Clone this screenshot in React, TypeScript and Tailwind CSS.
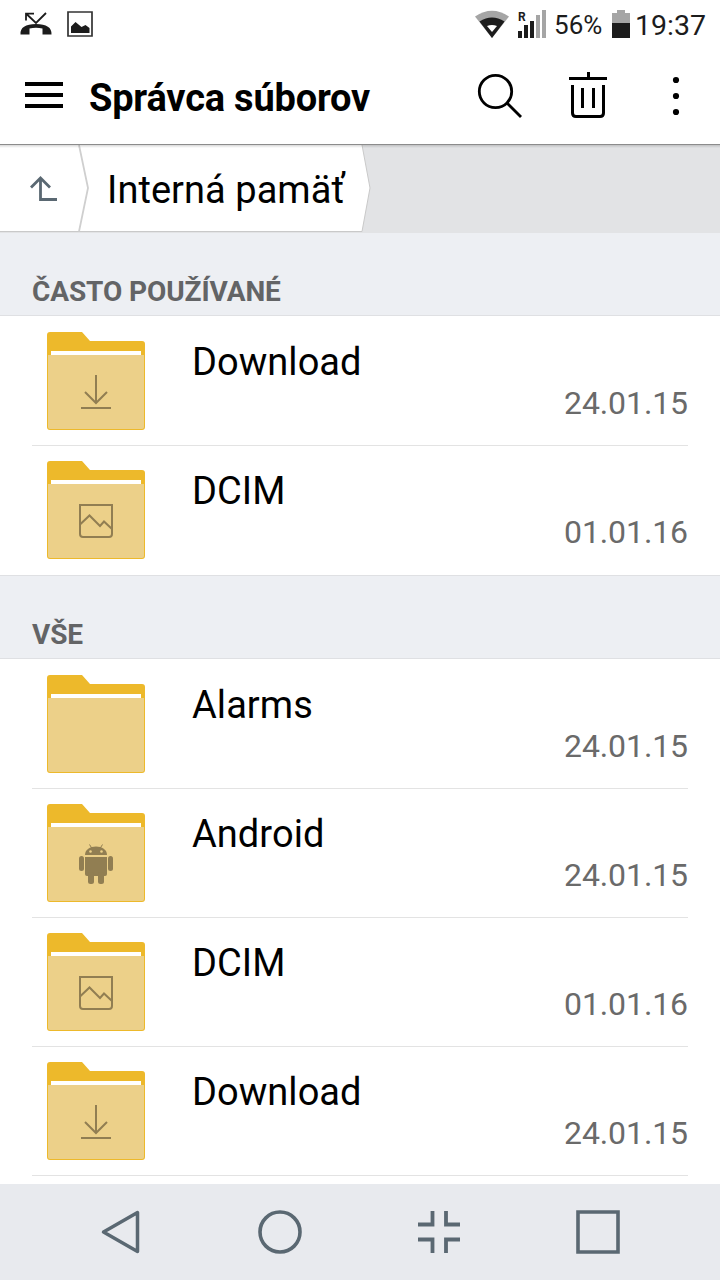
import type { ReactNode } from "react";

type FolderKind = "download" | "image" | "android" | "plain";

interface Folder {
  name: string;
  date: string;
  kind: FolderKind;
}

const frequent: Folder[] = [
  { name: "Download", date: "24.01.15", kind: "download" },
  { name: "DCIM", date: "01.01.16", kind: "image" },
];

const all: Folder[] = [
  { name: "Alarms", date: "24.01.15", kind: "plain" },
  { name: "Android", date: "24.01.15", kind: "android" },
  { name: "DCIM", date: "01.01.16", kind: "image" },
  { name: "Download", date: "24.01.15", kind: "download" },
];

const glyphs: Record<FolderKind, ReactNode> = {
  plain: null,
  download: (
    <path
      d="M49 43v27.5M38 60l11 11 11-11M34 76h30"
      fill="none"
      stroke="#917e52"
      strokeWidth="2"
    />
  ),
  image: (
    <g fill="none" stroke="#917e52" strokeWidth="2">
      <path d="M33 44h32v29a3 3 0 0 1-3 3H36a3 3 0 0 1-3-3z" />
      <path d="M33 63.500l9.500-9 10.500 10.500 4-4.500 8 7.500" />
    </g>
  ),
  android: (
    <g fill="#917e52">
      <path d="M38 51c0-5.500 5-8.500 11-8.500s11 3 11 8.500z" />
      <path d="M42.500 40.500l2.500 4M55.500 40.500l-2.500 4" stroke="#917e52" />
      <path d="M38 53h22v17a2 2 0 0 1-2 2H40a2 2 0 0 1-2-2z" />
      <rect x="32" y="52" width="5" height="15" rx="2.500" />
      <rect x="61" y="52" width="5" height="15" rx="2.500" />
      <rect x="41" y="68" width="6" height="12" rx="2.500" />
      <rect x="51" y="68" width="6" height="12" rx="2.500" />
      <circle cx="43.500" cy="47.500" r="1.300" fill="#ecd089" />
      <circle cx="54.500" cy="47.500" r="1.300" fill="#ecd089" />
    </g>
  ),
};

function FolderIcon({ kind }: { kind: FolderKind }) {
  return (
    <svg width="98" height="98" viewBox="0 0 98 98" className="shrink-0">
      <path
        d="M3 0H35L43 9H95a3 3 0 0 1 3 3V95a3 3 0 0 1-3 3H3a3 3 0 0 1-3-3V3a3 3 0 0 1 3-3z"
        fill="#edb92b"
      />
      <path d="M4 19h90v4H4z" fill="#fff" />
      <path
        d="M1 23h96v72a2 2 0 0 1-2 2H3a2 2 0 0 1-2-2z"
        fill="#ecd089"
      />
      {glyphs[kind]}
    </svg>
  );
}

function FolderList({ folders }: { folders: Folder[] }) {
  return (
    <ul className="bg-white px-8 pb-px">
      {folders.map((folder, i) => (
        <li
          key={i}
          className="flex h-[129px] border-t border-[#e3e3e3] pt-[15px] pl-[15px] first:border-transparent"
        >
          <FolderIcon kind={folder.kind} />
          <div className="ml-[47px] flex grow flex-col">
            <span className="mt-[7px] text-[38px] leading-[46px] tracking-[0.05px] text-black">
              {folder.name}
            </span>
            <span className="self-end text-[32px] leading-[36px] tracking-[-0.1px] text-[#6a6a6a]">
              {folder.date}
            </span>
          </div>
        </li>
      ))}
    </ul>
  );
}

function SectionTitle({ children }: { children: ReactNode }) {
  return (
    <h2 className="flex h-[83px] items-end border-b border-[#dfe0e3] bg-[#edeff3] px-8 pb-[7px] text-[28px] leading-[33px] font-bold tracking-[-0.1px] text-[#636466]">
      {children}
    </h2>
  );
}

function StatusBar() {
  return (
    <div className="flex h-12 items-center pr-[14px] pl-5 text-[#1c1c1c]">
      <svg width="32" height="26" viewBox="0 0 32 26">
        <path
          d="M.500 23.500c-.500-7 5-10.500 15.500-10.500s16 3.500 15.500 10.500h-9v-6q-6.500-1.500-13 0v6z"
          fill="#1c1c1c"
        />
        <path d="M6 9.500V2.700h8M6.500 3l9.500 9L26 2" fill="none" stroke="#1c1c1c" strokeWidth="1.800" />
      </svg>
      <svg width="26" height="26" viewBox="0 0 26 26" className="ml-[15px]">
        <path d="M1 1h24v24H1z" fill="none" stroke="#333" strokeWidth="1.700" />
        <path d="M4 22v-6.500l4.500-4.500 6 5 4-2 4 3v5z" fill="#1c1c1c" />
      </svg>
      <svg width="72" height="30" viewBox="0 0 72 30" className="ml-auto">
        <path d="M0 7.500Q17-4 34 7.500L17 29z" fill="#a5a5a5" />
        <path d="M4.500 12.500Q17 4.500 29.500 12.500L17 29z" fill="#1c1c1c" />
        <path d="M12 17q5-2 10 0l-5 6z" fill="#fff" />
        <text x="43" y="12" fontSize="12" fontWeight="700" fill="#1c1c1c">
          R
        </text>
        <path d="M43 22h4v7h-4zM49 16h4v13h-4zM55 12h4v17h-4z" fill="#1c1c1c" />
        <path d="M61 6h4v23h-4zM67 1h4v28h-4z" fill="#a5a5a5" />
      </svg>
      <span className="mt-[2px] ml-[7px] w-[53px] text-[26px] leading-8">56%</span>
      <svg width="18" height="28" viewBox="0 0 18 28" className="ml-[5px]">
        <path d="M5 0h8v3h5v11H0V3h5z" fill="#a5a5a5" />
        <path d="M0 13h18v15H0z" fill="#1c1c1c" />
      </svg>
      <span className="mt-[3px] ml-[5px] text-[28.500px] leading-8">19:37</span>
    </div>
  );
}

function Toolbar() {
  return (
    <header className="flex h-24 items-center pr-10 pl-[25px]">
      <svg width="38" height="26" viewBox="0 0 38 26" className="-mt-[2px]">
        <path d="M0 0h38v4H0zM0 11h38v4H0zM0 22h38v4H0z" />
      </svg>
      <h1 className="mt-1 ml-[26px] text-[38px] leading-[46px] font-bold tracking-[-0.2px] text-black">
        Správca súborov
      </h1>
      <svg width="46" height="46" viewBox="0 0 46 46" className="ml-auto">
        <g fill="none" stroke="#000" strokeWidth="2.800">
          <circle cx="18.500" cy="18.500" r="16.200" />
          <path d="M30 30l14 14" />
        </g>
      </svg>
      <svg width="38" height="46" viewBox="0 0 38 46" className="-mt-[2px] ml-[46px]">
        <path
          d="M0 6.500h38M19.500 0v7M3.500 13v28q0 3.500 3.500 3.500h24q3.500 0 3.500-3.500V13M13.500 16v20M24.500 16v20"
          fill="none"
          stroke="#000"
          strokeWidth="3"
        />
      </svg>
      <svg width="8" height="40" viewBox="0 0 8 40" className="-mt-px ml-[65px]">
        <circle cx="4" cy="4" r="3.100" />
        <circle cx="4" cy="20" r="3.100" />
        <circle cx="4" cy="36" r="3.100" />
      </svg>
    </header>
  );
}

function Breadcrumb() {
  return (
    <nav className="relative h-[89px] border-t border-[#8c8c8c] bg-[#e2e3e5]">
      <svg
        width="372"
        height="88"
        viewBox="0 0 372 88"
        className="absolute top-0 left-0"
      >
        <path d="M0 0H362L370 43L362 86.500H0z" fill="#fff" />
        <path
          d="M362 0L370 43L362 86.500H0"
          fill="none"
          stroke="#c9c9c9"
        />
        <path d="M79 0L88 43L79 86.500" fill="none" stroke="#cfcfcf" strokeWidth="1.800" />
        <path
          d="M31 42.500l9.500-9.500 9.500 9.500M40.500 33v21.500H57"
          fill="none"
          stroke="#5a6872"
          strokeWidth="2.800"
        />
      </svg>
      <div className="absolute inset-x-0 top-0 h-[3px] bg-linear-to-b from-black/15 to-transparent" />
      <span className="relative ml-[107px] block pt-[22px] text-[38px] leading-[46px] tracking-[0.05px] text-black">
        Interná pamäť
      </span>
    </nav>
  );
}

function NavBar() {
  return (
    <footer className="grid h-24 grid-cols-4 items-center justify-items-center bg-[#e8eaee] pr-[42px] pl-10">
      <svg width="40" height="44" viewBox="0 0 40 44" className="ml-px">
        <path
          d="M37.500 2.500v39L3.500 22z"
          fill="none"
          stroke="#5a6872"
          strokeWidth="3.500"
          strokeLinejoin="round"
        />
      </svg>
      <svg width="44" height="44" viewBox="0 0 44 44" className="ml-px">
        <circle cx="22" cy="22" r="20" fill="none" stroke="#5a6872" strokeWidth="3.600" />
      </svg>
      <svg width="44" height="44" viewBox="0 0 44 44">
        <path
          d="M15.500 1v13.500H1M29 1v13.500h14M1 29.500h14.500V43M43 29.500H29V43"
          fill="none"
          stroke="#5a6872"
          strokeWidth="3.800"
        />
      </svg>
      <svg width="44" height="44" viewBox="0 0 44 44">
        <path d="M2 2h40v40H2z" fill="none" stroke="#5a6872" strokeWidth="3.600" />
      </svg>
    </footer>
  );
}

export default function App() {
  return (
    <div className="flex h-[1280px] w-[720px] flex-col overflow-hidden bg-white font-['Roboto',sans-serif]">
      <StatusBar />
      <Toolbar />
      <Breadcrumb />
      <main className="min-h-0 grow overflow-hidden">
        <SectionTitle>ČASTO POUŽÍVANÉ</SectionTitle>
        <FolderList folders={frequent} />
        <div className="border-t border-[#dfe0e3]">
          <SectionTitle>VŠE</SectionTitle>
        </div>
        <FolderList folders={all} />
        <div className="mx-8 -mt-px border-t border-[#e3e3e3]" />
      </main>
      <NavBar />
    </div>
  );
}
